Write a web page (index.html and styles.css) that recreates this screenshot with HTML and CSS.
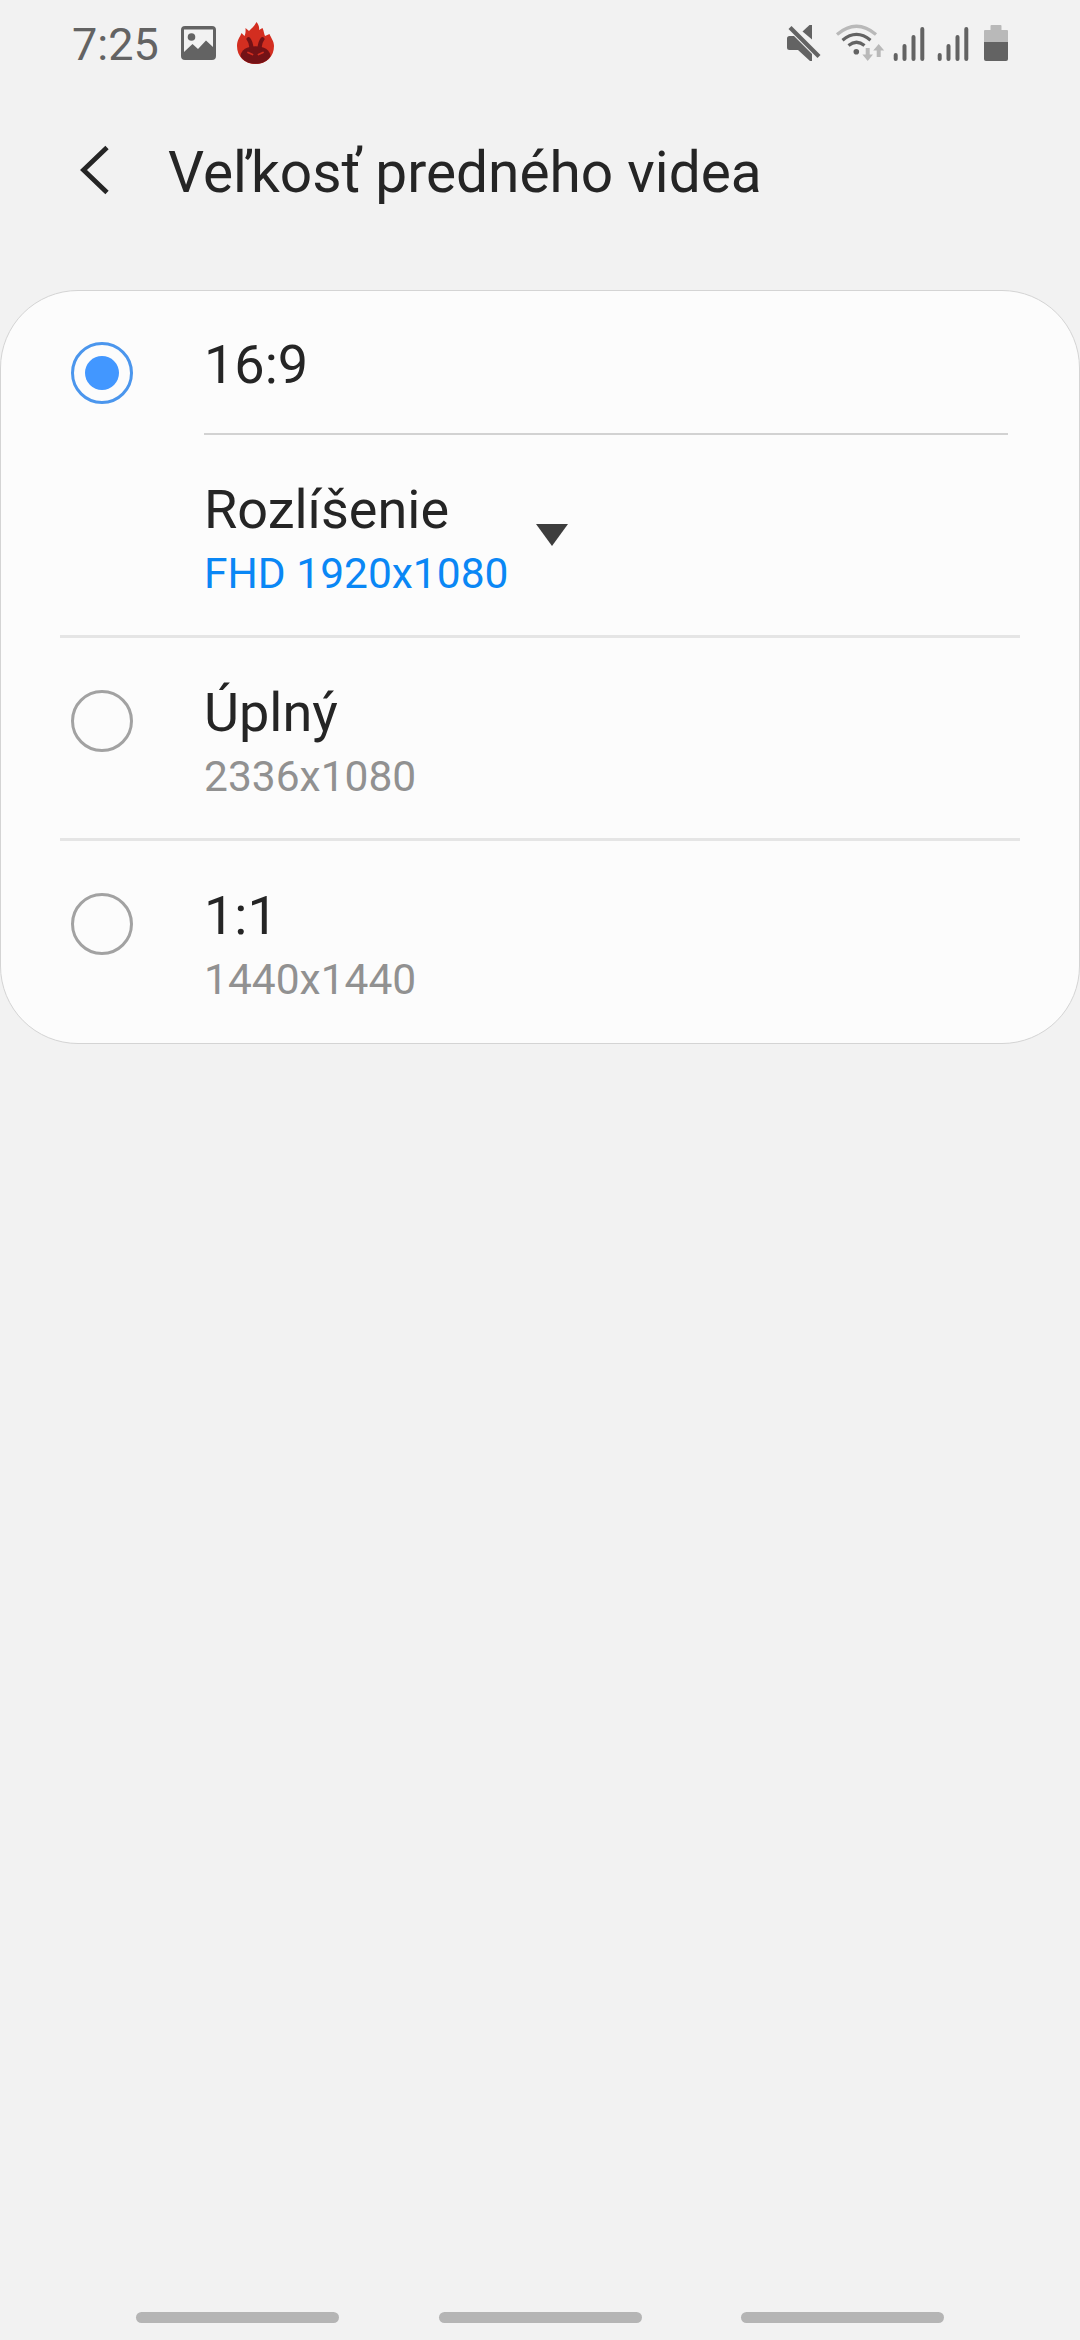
FILE: index.html
```html
<!DOCTYPE html>
<html lang="sk">
<head>
<meta charset="utf-8">
<title>Veľkosť predného videa</title>
<link rel="stylesheet" href="styles.css">
</head>
<body>
<div class="screen">
  <header class="status-bar">
    <span class="clock">7:25</span>
    <svg class="status-left" width="100" height="90" viewBox="0 0 100 90" aria-hidden="true">
      <path fill="#636363" fill-rule="evenodd" d="M5 26H32Q36 26 36 30V56Q36 60 32 60H5Q1 60 1 56V30Q1 26 5 26ZM4 29.500V52L12.500 44L18 49L26 40.500L33 47V29.500Z"/>
      <circle cx="11.500" cy="37" r="3.800" fill="#636363"/>
      <path fill="#d32e20" d="M75.500 64C64.500 64 57 56.500 57 46C57 40 60 37 61.500 33L64.500 36C66 33 65.500 30 65.500 28L69 31C72 28 74.500 26 76.500 22C79 25 79.500 28 79 30L82.500 28C84 31 84 34 85 36L89.500 34C91 38 94 41 94 46C94 56.500 86.500 64 75.500 64Z"/>
      <path fill="#741216" d="M60.500 56C61 50 67 46.300 75.500 46.300S90 50 90.500 56C88 61 82 63.800 75.500 63.800S63 61 60.500 56Z"/>
      <path d="M68.500 39Q71 42 71.500 48M82.500 39Q80 42 79.500 48" fill="none" stroke="#741216" stroke-width="4" stroke-linecap="round"/>
      <path d="M68 52.500L72.500 54.500M83 52.500L78.500 54.500" fill="none" stroke="#d32e20" stroke-width="1.800" stroke-linecap="round"/>
    </svg>
    <svg class="status-right" width="230" height="90" viewBox="780 0 230 90" aria-hidden="true">
      <g fill="#636363">
        <path d="M789.500 36H794L812 54V61H810L798 50H789.500Q787 50 787 47.500V38.500Q787 36 789.500 36Z"/>
        <path d="M809.500 25H812V39.500L802.500 31.500Z"/>
        <path d="M790 27.500L819 56.500" fill="none" stroke="#636363" stroke-width="4.200"/>
        <circle cx="856.300" cy="51.800" r="2.800"/>
      </g>
      <g fill="none" stroke-width="3.200">
        <path stroke="#b9b9b9" d="M837 34.500Q856.500 18 876 34.500"/>
        <path stroke="#636363" d="M842.500 40.200Q856.500 28.500 870.500 40.200"/>
        <path stroke="#636363" d="M848.500 45.500Q856.500 39 864.500 45.500"/>
      </g>
      <g fill="#b9b9b9">
        <path d="M865.700 48H869.700V54.500H873L867.700 61L862.400 54.500H865.700Z"/>
        <path d="M876.700 57V50.500H873.200L878.700 44L884.200 50.500H880.700V57Z"/>
      </g>
      <g stroke="#636363" stroke-width="4" stroke-linecap="round">
        <path d="M895.700 55V59M904.500 46V59M913.500 37V59M922.300 29V59"/>
        <path d="M939.700 55V59M948.500 46V59M957.500 37V59M966.300 29V59"/>
      </g>
      <path fill="#b9b9b9" d="M984 42V31Q984 30 985 30H990.500V26Q990.500 25 991.500 25H1000.500Q1001.500 25 1001.500 26V30H1007Q1008 30 1008 31V42Z"/>
      <path fill="#636363" d="M984 42H1008V59Q1008 61 1006 61H986Q984 61 984 59Z"/>
    </svg>
  </header>

  <div class="app-bar">
    <svg class="back" width="30" height="50" viewBox="0 0 30 50" aria-hidden="true"><path d="M27 2.500L3.500 25L27 47.500" fill="none" stroke="#252525" stroke-width="4.800"/></svg>
    <h1 class="heading">Veľkosť predného videa</h1>
  </div>

  <main class="card">
    <section class="option option-first">
      <span class="radio radio-on"></span>
      <div class="label"><div class="name">16:9</div></div>
    </section>
    <hr class="rule rule-inset">
    <section class="option resolution">
      <div class="label">
        <div class="name">Rozlíšenie</div>
        <div class="detail detail-active">FHD 1920x1080</div>
      </div>
      <svg class="caret" width="32" height="22" viewBox="0 0 32 22" aria-hidden="true"><path d="M0 0H32L16 22Z" fill="#3d3d3d"/></svg>
    </section>
    <hr class="rule">
    <section class="option">
      <span class="radio"></span>
      <div class="label">
        <div class="name">Úplný</div>
        <div class="detail">2336x1080</div>
      </div>
    </section>
    <hr class="rule">
    <section class="option">
      <span class="radio"></span>
      <div class="label">
        <div class="name">1:1</div>
        <div class="detail">1440x1440</div>
      </div>
    </section>
  </main>

  <nav class="nav-bar">
    <span class="hint"></span>
    <span class="hint"></span>
    <span class="hint"></span>
  </nav>
</div>
</body>
</html>
```
FILE: styles.css
```css
* { box-sizing: border-box; }

body {
  margin: 0;
  background: #f2f2f2;
  color: #252525;
  font-family: Roboto, "Noto Sans", sans-serif;
}

.screen {
  display: flex;
  flex-direction: column;
  width: 1080px;
  height: 2340px;
}

.status-bar {
  display: flex;
  height: 90px;
  padding: 0 70px 0 72px;
}

.clock {
  width: 108px;
  font-size: 45px;
  line-height: 53px;
  padding-top: 18px;
  color: #636363;
  white-space: nowrap;
}

.status-right { margin-left: auto; }

.app-bar {
  display: flex;
  align-items: center;
  height: 160px;
  margin-bottom: 40px;
  padding-left: 80px;
}

.back { flex: none; }

.heading {
  margin: 0 0 0 58px;
  padding-top: 5px;
  font-size: 56.8px;
  font-weight: 400;
  line-height: 66px;
  white-space: nowrap;
}

.card {
  height: 754px;
  background: #fcfcfc;
  border: 1px solid #d4d4d4;
  border-radius: 78px;
}

.option {
  display: flex;
  height: 200px;
  padding: 39px 71px 0 70px;
}

.option-first {
  height: 142px;
  padding-top: 38px;
}

.resolution { padding-left: 203px; }

.radio {
  flex: none;
  display: grid;
  place-items: center;
  width: 62px;
  height: 62px;
  margin: 13px 71px 0 0;
  border: 3px solid #a2a2a2;
  border-radius: 50%;
}

.radio-on { border-color: #4b96ed; }

.radio-on::after {
  content: "";
  width: 34px;
  height: 34px;
  border-radius: 50%;
  background: #4297ff;
}

.name {
  font-size: 54px;
  line-height: 71px;
}

.detail {
  font-size: 42.5px;
  line-height: 58px;
  color: #919191;
}

.detail-active { color: #0a87f5; }

.caret { margin: 50px 0 0 28px; }

.rule {
  height: 3px;
  margin: 0 59px;
  border: 0;
  background: #e5e5e5;
}

.rule-inset {
  height: 2px;
  margin: 0 71px 0 203px;
  background: #d2d2d2;
}

.nav-bar {
  display: flex;
  justify-content: center;
  gap: 99.5px;
  margin-top: auto;
  padding-bottom: 17px;
}

.hint {
  width: 203px;
  height: 11px;
  border-radius: 6px;
  background: #b5b5b5;
}
```
